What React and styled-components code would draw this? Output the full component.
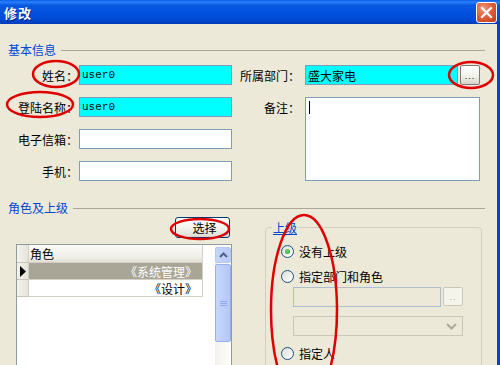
import React from "react";
import styled, { createGlobalStyle } from "styled-components";

const GlobalStyle = createGlobalStyle`
  html, body {
    margin: 0;
    padding: 0;
    background: #ECE9D8;
  }
  * {
    box-sizing: border-box;
  }
`;

const CJK = `"Noto Sans CJK SC", "Noto Sans", sans-serif`;

const Window = styled.div`
  position: relative;
  width: 500px;
  height: 365px;
  overflow: hidden;
  font-family: ${CJK};
  font-size: 12px;
  color: #000;
`;

const TitleBar = styled.div`
  height: 24px;
  display: flex;
  align-items: center;
  justify-content: space-between;
  padding: 0 3px 0 4px;
  background: linear-gradient(
    #0a5ae8 0%,
    #2a80fa 8%,
    #0858e2 22%,
    #0050de 60%,
    #0048d0 85%,
    #003cb4 100%
  );
`;

const Title = styled.span`
  color: #fff;
  font-weight: bold;
  font-size: 13px;
  letter-spacing: 1px;
  text-shadow: 1px 1px 0 #0a1f7a;
`;

const CloseButton = styled.div`
  width: 21px;
  height: 21px;
  border: 1px solid #fff;
  border-radius: 3px;
  background: radial-gradient(circle at 35% 30%, #f09a80 0%, #e0603c 45%, #c23a12 100%);
  display: flex;
  align-items: center;
  justify-content: center;
`;

const Body = styled.div`
  height: 341px;
  border-right: 3px solid #0a3ee0;
  padding: 19px 12px 0 8px;
`;

const SectionHeader = styled.div`
  display: flex;
  align-items: center;
  height: 14px;
  gap: 5px;
  margin-top: ${(p) => p.$top || 0}px;
`;

const SectionTitle = styled.span`
  color: #0046d5;
  font-size: 12px;
  line-height: 14px;
  white-space: nowrap;
`;

const SectionLine = styled.div`
  flex: 1;
  height: 1px;
  background: #aca899;
`;

const FormGrid = styled.div`
  margin-top: 8px;
  display: grid;
  grid-template-columns: 71px 153px 73px 175px;
  grid-template-rows: repeat(4, 20px);
  row-gap: 12px;
`;

const Label = styled.div`
  display: flex;
  align-items: center;
  justify-content: flex-end;
  padding-right: ${(p) => p.$pad}px;
  white-space: nowrap;
`;

const TextBox = styled.div`
  height: 20px;
  border: 1px solid #7f9db9;
  background: ${(p) => (p.$filled ? "#00FFFF" : "#fff")};
  display: flex;
  align-items: center;
  padding-left: 2px;
  font-family: ${(p) => (p.$mono ? `"Liberation Mono", monospace` : CJK)};
  font-size: ${(p) => (p.$mono ? "11px" : "12px")};
  flex: ${(p) => (p.$grow ? 1 : "none")};
`;

const FieldWithButton = styled.div`
  display: flex;
  gap: 2px;
  margin-top: ${(p) => p.$top || 0}px;
`;

const DotsButton = styled.div`
  width: 20px;
  height: ${(p) => (p.$small ? 19 : 20)}px;
  border: 1px solid ${(p) => (p.$disabled ? "#cbc7b8" : "#7a7a7a")};
  border-radius: 2px;
  background: ${(p) =>
    p.$disabled ? "#f5f4ea" : "linear-gradient(#fff, #f0f0ea 60%, #d8d5c8)"};
  color: ${(p) => (p.$disabled ? "#aca899" : "#000")};
  font-family: "Liberation Sans", sans-serif;
  font-size: 9px;
  display: flex;
  align-items: flex-end;
  justify-content: center;
  padding-bottom: 3px;
  letter-spacing: 1px;
`;

const Memo = styled.div`
  grid-column: 4;
  grid-row: 2 / span 3;
  border: 1px solid #7f9db9;
  background: #fff;
  padding: 3px 0 0 3px;
`;

const Caret = styled.div`
  width: 1px;
  height: 13px;
  background: #000;
`;

const LowerRow = styled.div`
  display: flex;
  align-items: flex-start;
`;

const LeftColumn = styled.div`
  margin-left: 8px;
  width: 216px;
  display: flex;
  flex-direction: column;
  align-items: flex-end;
`;

const PushButton = styled.div`
  margin-top: 2px;
  margin-right: 2px;
  width: 55px;
  height: 21px;
  border: 1px solid #003c74;
  border-radius: 3px;
  background: linear-gradient(#fff, #f4f3ee 50%, #e3e2da 90%, #d6d0c5);
  display: flex;
  align-items: center;
  justify-content: center;
  padding-left: 4px;
  font-size: 12px;
`;

const DataGrid = styled.div`
  margin-top: 6px;
  width: 216px;
  height: 130px;
  border: 1px solid #919b9c;
  background: #fff;
  display: flex;
`;

const Table = styled.div`
  flex: 1;
  display: flex;
  flex-direction: column;
`;

const Row = styled.div`
  display: flex;
  height: ${(p) => (p.$head ? 18 : 17)}px;
`;

const RowHead = styled.div`
  width: 12px;
  border-right: 1px solid #d4d0c8;
  border-bottom: 1px solid #c8c5b8;
  background: linear-gradient(90deg, #f4f3ee, #e6e4da);
  display: flex;
  align-items: center;
  justify-content: center;
`;

const Cell = styled.div`
  width: 174px;
  border-bottom: 1px solid #d4d0c8;
  border-right: 1px solid #d4d0c8;
  display: flex;
  align-items: center;
  justify-content: ${(p) => (p.$head ? "flex-start" : "flex-end")};
  padding: ${(p) => (p.$head ? "0 0 0 1px" : "0 5px 0 0")};
  background: ${(p) =>
    p.$head
      ? "linear-gradient(#fbfbf8, #efeee8 70%, #e2e0d6)"
      : p.$selected
      ? "#a9a698"
      : "#fff"};
  color: ${(p) => (p.$selected ? "#fff" : "#000")};
  font-size: 12px;
`;

const ScrollBar = styled.div`
  width: 17px;
  margin: 1px 1px 0 12px;
  background: linear-gradient(90deg, #f3f1ec, #fefefb);
  display: flex;
  flex-direction: column;
  align-items: center;
  padding-top: 1px;
`;

const ScrollArrow = styled.div`
  width: 16px;
  height: 16px;
  border: 1px solid #b6c8f4;
  border-radius: 2px;
  background: linear-gradient(90deg, #c5d5fc, #b7cafa);
  display: flex;
  align-items: center;
  justify-content: center;
`;

const ScrollThumb = styled.div`
  width: 16px;
  height: 78px;
  margin-top: 1px;
  border: 1px solid #98b1ee;
  border-radius: 2px;
  background: linear-gradient(90deg, #c7d6fc, #b3c7f8);
  display: flex;
  flex-direction: column;
  align-items: center;
  justify-content: center;
  gap: 1px;
`;

const Grip = styled.div`
  width: 7px;
  height: 1px;
  background: #eef3fe;
  border-bottom: 1px solid #8faaec;
`;

const GroupBox = styled.fieldset`
  margin: 6px 0 0 33px;
  padding: 0 0 0 15px;
  width: 217px;
  height: 165px;
  border: 1px solid #d0d0bf;
  border-radius: 4px;
`;

const Legend = styled.legend`
  margin-left: -9px;
  padding: 0 1px;
  color: #0046d5;
  font-size: 12px;
  line-height: 13px;
  text-decoration: underline;
`;

const RadioRow = styled.div`
  display: flex;
  align-items: center;
  gap: 5px;
  height: 14px;
  margin-top: ${(p) => p.$top}px;
`;

const RadioDot = styled.div`
  width: 13px;
  height: 13px;
  border-radius: 50%;
  border: 1px solid #1c5180;
  background: linear-gradient(135deg, #dcdcd7, #fff);
  display: flex;
  align-items: center;
  justify-content: center;
  &::after {
    content: "";
    display: ${(p) => (p.$checked ? "block" : "none")};
    width: 5px;
    height: 5px;
    border-radius: 50%;
    background: radial-gradient(circle at 40% 40%, #6fd36f, #21a121);
  }
`;

const Indent = styled.div`
  margin-left: 12px;
  width: 170px;
`;

const DisabledBox = styled.div`
  width: 148px;
  height: 20px;
  border: 1px solid #aebed0;
  background: #ece9d8;
`;

const ComboBox = styled.div`
  margin-top: 9px;
  width: 170px;
  height: 20px;
  border: 1px solid #c9c7ba;
  display: flex;
  align-items: center;
  justify-content: flex-end;
  padding-right: 5px;
`;

const Overlay = styled.svg`
  position: absolute;
  left: 0;
  top: 0;
  pointer-events: none;
`;

export default function App() {
  return (
    <>
      <GlobalStyle />
      <Window>
        <TitleBar>
          <Title>修改</Title>
          <CloseButton>
            <svg width="13" height="13" viewBox="0 0 13 13">
              <path d="M2 2 L11 11 M11 2 L2 11" stroke="#fff" strokeWidth="2.2" strokeLinecap="square" />
            </svg>
          </CloseButton>
        </TitleBar>
        <Body>
          <SectionHeader>
            <SectionTitle>基本信息</SectionTitle>
            <SectionLine />
          </SectionHeader>
          <FormGrid>
            <Label $pad={1}>姓名：</Label>
            <TextBox $filled $mono>user0</TextBox>
            <Label $pad={5}>所属部门：</Label>
            <FieldWithButton>
              <TextBox $filled $grow>盛大家电</TextBox>
              <DotsButton>...</DotsButton>
            </FieldWithButton>

            <Label $pad={1}>登陆名称：</Label>
            <TextBox $filled $mono>user0</TextBox>
            <Label $pad={5}>备注：</Label>
            <Memo>
              <Caret />
            </Memo>

            <Label $pad={1}>电子信箱：</Label>
            <TextBox />
            <div />

            <Label $pad={1}>手机：</Label>
            <TextBox />
            <div />
          </FormGrid>

          <SectionHeader $top={20}>
            <SectionTitle>角色及上级</SectionTitle>
            <SectionLine />
          </SectionHeader>

          <LowerRow>
            <LeftColumn>
              <PushButton>选择</PushButton>
              <DataGrid>
                <Table>
                  <Row $head>
                    <RowHead />
                    <Cell $head>角色</Cell>
                  </Row>
                  <Row>
                    <RowHead>
                      <svg width="7" height="11" viewBox="0 0 7 11">
                        <path d="M1 0 L7 5.5 L1 11 Z" fill="#000" />
                      </svg>
                    </RowHead>
                    <Cell $selected>《系统管理》</Cell>
                  </Row>
                  <Row>
                    <RowHead />
                    <Cell>《设计》</Cell>
                  </Row>
                </Table>
                <ScrollBar>
                  <ScrollArrow>
                    <svg width="9" height="6" viewBox="0 0 9 6">
                      <path d="M1 5 L4.5 1.5 L8 5" fill="none" stroke="#4d6185" strokeWidth="2" />
                    </svg>
                  </ScrollArrow>
                  <ScrollThumb>
                    <Grip />
                    <Grip />
                    <Grip />
                  </ScrollThumb>
                </ScrollBar>
              </DataGrid>
            </LeftColumn>

            <GroupBox>
              <Legend>上级</Legend>
              <RadioRow $top={10}>
                <RadioDot $checked />
                <span>没有上级</span>
              </RadioRow>
              <RadioRow $top={11}>
                <RadioDot />
                <span>指定部门和角色</span>
              </RadioRow>
              <Indent>
                <FieldWithButton $top={4}>
                  <DisabledBox />
                  <DotsButton $disabled $small>..</DotsButton>
                </FieldWithButton>
                <ComboBox>
                  <svg width="11" height="7" viewBox="0 0 11 7">
                    <path d="M1 1 L5.5 5.5 L10 1" fill="none" stroke="#aca899" strokeWidth="2" />
                  </svg>
                </ComboBox>
              </Indent>
              <RadioRow $top={10}>
                <RadioDot />
                <span>指定人</span>
              </RadioRow>
            </GroupBox>
          </LowerRow>
        </Body>

        <Overlay width="500" height="365" viewBox="0 0 500 365">
          <g fill="none" stroke="#e00000" strokeWidth="2.5">
            <ellipse cx="56" cy="74" rx="23" ry="13" />
            <ellipse cx="40" cy="104.5" rx="33" ry="12.5" />
            <ellipse cx="471" cy="75" rx="22" ry="13" />
            <ellipse cx="200" cy="229" rx="29" ry="10" />
            <ellipse cx="304" cy="310" rx="33" ry="95" />
          </g>
        </Overlay>
      </Window>
    </>
  );
}
